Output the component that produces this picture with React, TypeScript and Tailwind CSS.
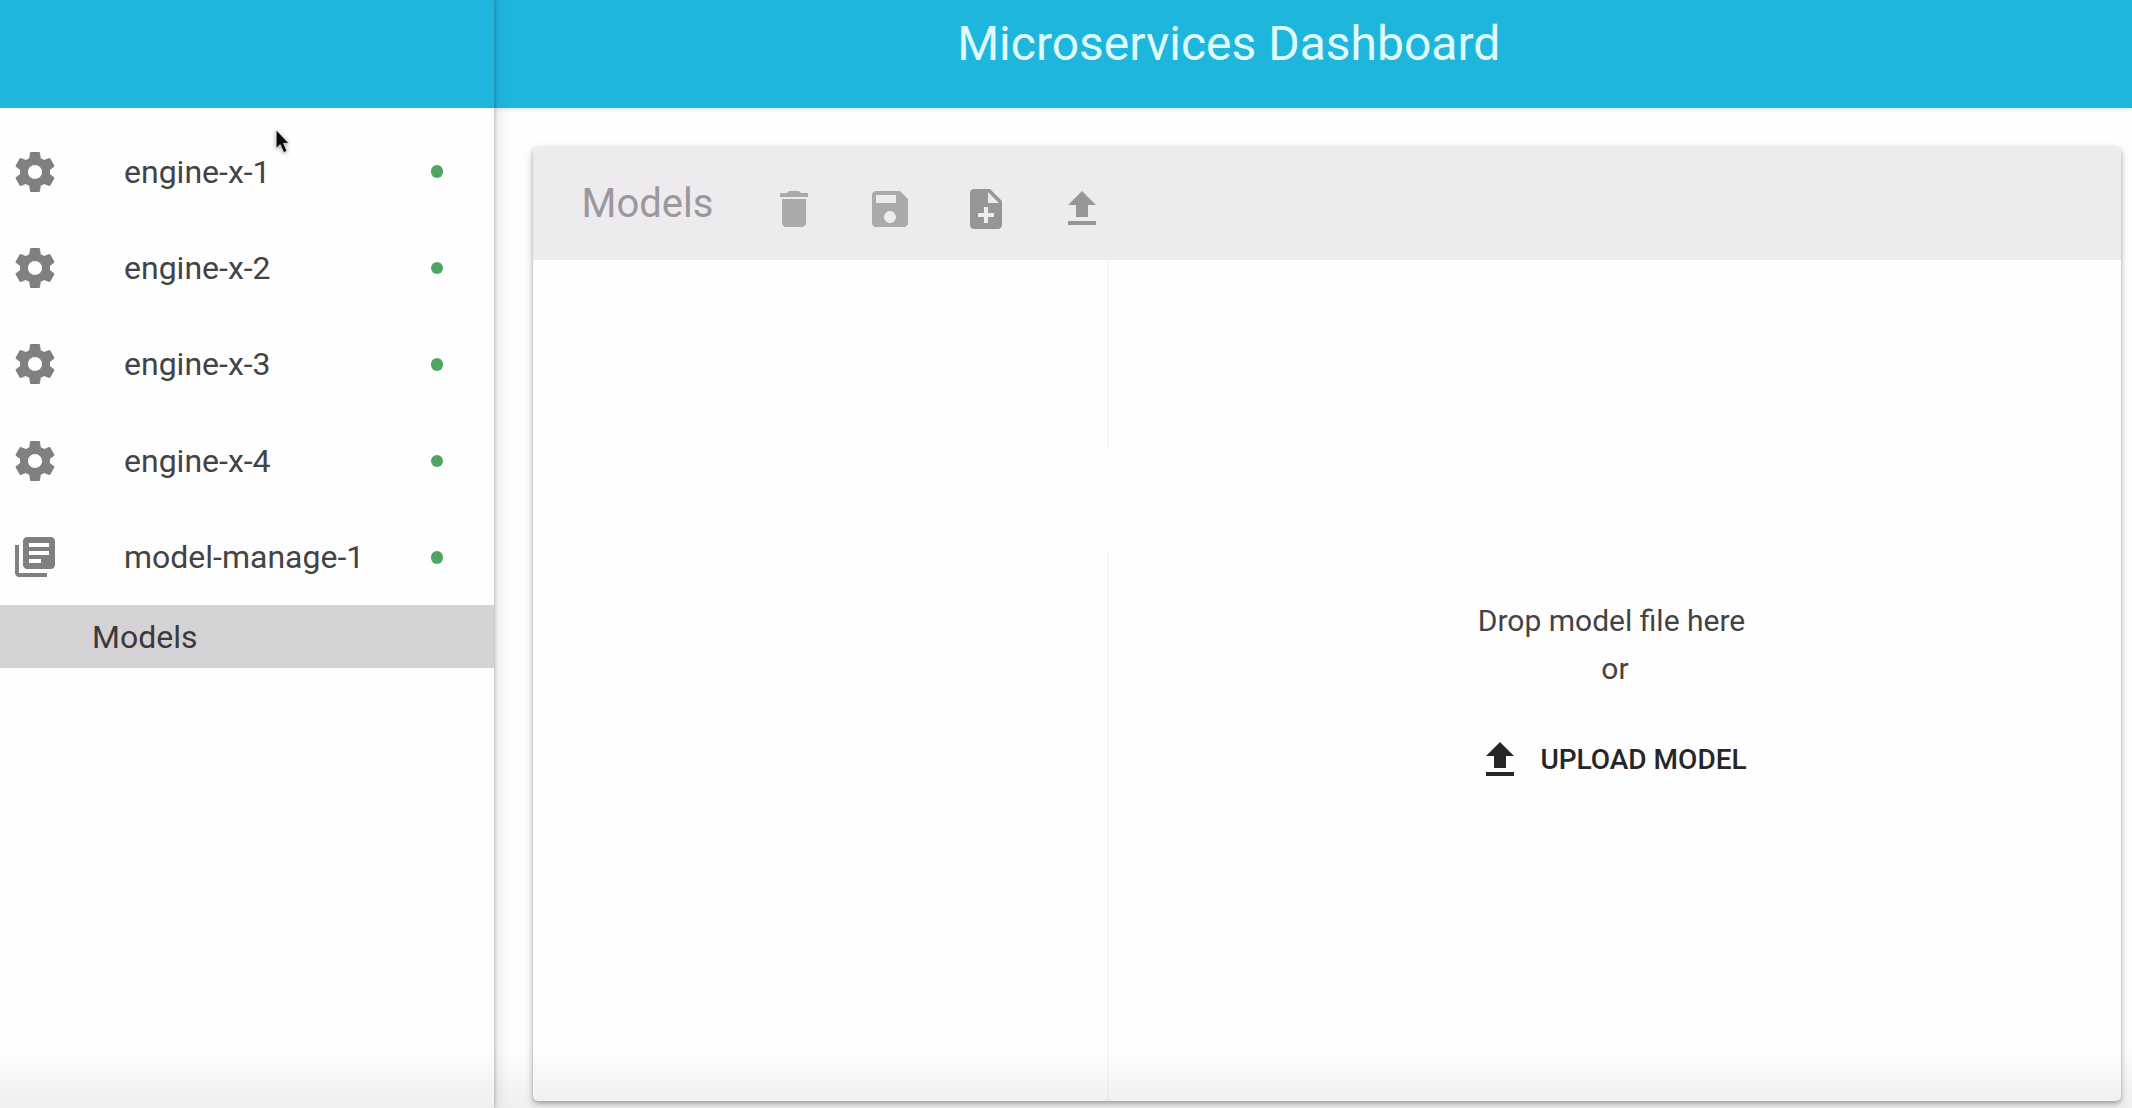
import type { ReactNode } from "react";

const paths = {
  settings:
    "M19.43 12.98c.04-.32.07-.64.07-.98s-.03-.66-.07-.98l2.11-1.65c.19-.15.24-.42.12-.64l-2-3.46c-.12-.22-.39-.3-.61-.22l-2.49 1c-.52-.4-1.08-.73-1.69-.98l-.38-2.65C14.46 2.18 14.25 2 14 2h-4c-.25 0-.46.18-.49.42l-.38 2.65c-.61.25-1.17.59-1.69.98l-2.49-1c-.23-.09-.49 0-.61.22l-2 3.46c-.13.22-.07.49.12.64l2.11 1.65c-.04.32-.07.65-.07.98s.03.66.07.98l-2.11 1.65c-.19.15-.24.42-.12.64l2 3.46c.12.22.39.3.61.22l2.49-1c.52.4 1.08.73 1.69.98l.38 2.65c.03.24.24.42.49.42h4c.25 0 .46-.18.49-.42l.38-2.65c.61-.25 1.17-.59 1.69-.98l2.49 1c.23.09.49 0 .61-.22l2-3.46c.12-.22.07-.49-.12-.64l-2.11-1.65zM12 15.5c-1.93 0-3.5-1.57-3.5-3.5s1.57-3.5 3.5-3.5 3.5 1.57 3.5 3.5-1.57 3.5-3.5 3.5z",
  library:
    "M4 6H2v14c0 1.1.9 2 2 2h14v-2H4V6zm16-4H8c-1.1 0-2 .9-2 2v12c0 1.1.9 2 2 2h12c1.1 0 2-.9 2-2V4c0-1.1-.9-2-2-2zm-1 9H9V9h10v2zm-4 4H9v-2h6v2zm4-8H9V5h10v2z",
  trash:
    "M6 19c0 1.1.9 2 2 2h8c1.1 0 2-.9 2-2V7H6v12zM19 4h-3.5l-1-1h-5l-1 1H5v2h14V4z",
  save:
    "M17 3H5c-1.11 0-2 .9-2 2v14c0 1.1.89 2 2 2h14c1.1 0 2-.9 2-2V7l-4-4zm-5 16c-1.66 0-3-1.34-3-3s1.34-3 3-3 3 1.34 3 3-1.34 3-3 3zm3-10H5V5h10v4z",
  noteAdd:
    "M14 2H6c-1.1 0-1.99.9-1.99 2L4 20c0 1.1.89 2 1.99 2H18c1.1 0 2-.9 2-2V8l-6-6zm2 14h-3v3h-2v-3H8v-2h3v-3h2v3h3v2zm-3-7V3.5L18.5 9H13z",
  upload: "M9 16h6v-6h4l-7-7-7 7h4zm-4 2h14v2H5z",
};

type IconName = keyof typeof paths;

function Icon({ name, className }: { name: IconName; className: string }) {
  return (
    <svg viewBox="0 0 24 24" fill="currentColor" className={`size-12 shrink-0 ${className}`}>
      <path d={paths[name]} />
    </svg>
  );
}

const services: { name: string; icon: IconName }[] = [
  { name: "engine-x-1", icon: "settings" },
  { name: "engine-x-2", icon: "settings" },
  { name: "engine-x-3", icon: "settings" },
  { name: "engine-x-4", icon: "settings" },
  { name: "model-manage-1", icon: "library" },
];

function ServiceRow({ name, icon }: { name: string; icon: IconName }) {
  return (
    <li className="flex h-[96.4px] items-center pl-[11px] pr-[50.5px]">
      <Icon name={icon} className="text-[#808082]" />
      <span className="ml-[65px] flex-1 text-[32px] leading-[48px] text-[#434345]">{name}</span>
      <span className="size-[12.5px] rounded-full bg-[#4fa563]" />
    </li>
  );
}

function Sidebar() {
  return (
    <aside className="relative z-20 flex w-[493.5px] shrink-0 flex-col bg-[#fefefe] shadow-[1px_0_3px_rgba(40,25,45,0.22),3px_0_12px_rgba(40,25,45,0.13)]">
      <div className="h-[108px] shrink-0 bg-[#1fb6de]" />
      <ul className="mt-[15.5px]">
        {services.map((s) => (
          <ServiceRow key={s.name} {...s} />
        ))}
      </ul>
      <div className="flex h-[63px] items-center bg-[#d4d2d5] pl-[92px] text-[32px] text-[#3a393c]">
        Models
      </div>
    </aside>
  );
}

function ToolButton({ children }: { children: ReactNode }) {
  return <button className="flex size-12 items-center justify-center">{children}</button>;
}

function ModelsCard() {
  return (
    <section className="ml-[39.5px] mr-[11px] mt-[39px] flex h-[954px] flex-col overflow-hidden rounded-[5px] bg-[#fefefe] shadow-[0_2px_4px_rgba(40,30,45,0.3),0_3px_10px_rgba(40,30,45,0.18)]">
      <div className="flex h-[112.5px] shrink-0 items-start bg-[#edebee] pl-[48.5px]">
        <h2 className="mt-[33px] w-[188px] text-[40px] leading-[48px] text-[#9a989b]">Models</h2>
        <div className="mt-[37.5px] flex gap-[48.3px]">
          <ToolButton><Icon name="trash" className="text-[#aba9ac]" /></ToolButton>
          <ToolButton><Icon name="save" className="text-[#aba9ac]" /></ToolButton>
          <ToolButton><Icon name="noteAdd" className="text-[#979598]" /></ToolButton>
          <ToolButton><Icon name="upload" className="text-[#979598]" /></ToolButton>
        </div>
      </div>
      <div className="flex flex-1">
        <div className="flex w-[576px] shrink-0 flex-col items-end">
          <div className="h-[188px] w-[2px] bg-[#f7f6f7]" />
          <div className="mt-[103px] w-[2px] flex-1 bg-[#f7f6f7]" />
        </div>
        <div className="flex flex-1 flex-col items-center pr-[7px] pt-[337px] text-[#434345]">
          <p className="text-[30px] leading-[48px]">Drop model file here</p>
          <p className="ml-[7px] text-[30px] leading-[48px]">or</p>
          <button className="mt-[43px] flex h-12 items-center text-[#262528]">
            <Icon name="upload" className="" />
            <span className="ml-[16px] text-[28px] font-medium">UPLOAD MODEL</span>
          </button>
        </div>
      </div>
    </section>
  );
}

export default function App() {
  return (
    <div className="relative flex h-[1108px] w-[2132px] overflow-hidden bg-[#fefefe] font-[Roboto,sans-serif]">
      <Sidebar />
      <div className="flex min-w-0 flex-1 flex-col">
        <header className="flex h-[108px] shrink-0 justify-center bg-[#1fb6de] pr-[168px] shadow-[0_1px_5px_rgba(60,30,40,0.14)]">
          <h1 className="mt-[15.5px] text-[48px] leading-[56px] text-[#e0fbff]">Microservices Dashboard</h1>
        </header>
        <ModelsCard />
      </div>
      <div className="pointer-events-none absolute inset-x-0 bottom-0 z-30 h-[60px] bg-gradient-to-b from-transparent to-black/6" />
      <svg viewBox="0 0 14 23" className="pointer-events-none absolute left-[275px] top-[129px] z-40 h-[24px] w-[15px] drop-shadow-[0_1px_2px_rgba(0,0,0,0.35)]">
        <path d="M1 1v17.5l3.8-3.7L8.2 22.5l3-1.3-3.3-7.5H13z" fill="#0b0b0c" stroke="#fff" strokeWidth="0.5" />
      </svg>
    </div>
  );
}
